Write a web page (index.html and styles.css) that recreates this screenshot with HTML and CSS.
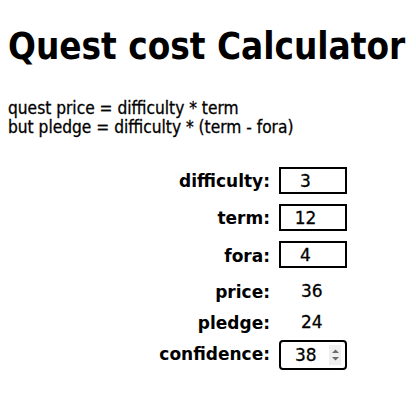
FILE: index.html
```html
<!DOCTYPE html>
<html lang="en">
<head>
  <meta charset="UTF-8">
  <title>Quest cost Calculator</title>
  <link rel="stylesheet" href="styles.css">
</head>
<body>
  <h1>Quest cost Calculator</h1>

  <p class="formula">
    quest price = difficulty * term<br>
    but pledge = difficulty * (term - fora)
  </p>

  <div class="calc">
    <label for="difficulty">difficulty:</label>
    <input id="difficulty" class="box" type="text" value="3">

    <label for="term">term:</label>
    <input id="term" class="box" type="text" value="12">

    <label for="fora">fora:</label>
    <input id="fora" class="box last" type="text" value="4">

    <span class="name">price:</span>
    <span class="value">36</span>

    <span class="name">pledge:</span>
    <span class="value">24</span>

    <label for="confidence">confidence:</label>
    <div class="spin">
      <span class="spin-value">38</span>
      <span class="spin-arrows">
        <svg width="9" height="14" viewBox="0 0 9 14">
          <path d="M1 5 L4.5 1.5 L8 5 Z" fill="#6b6b6b"/>
          <path d="M1 9 L4.5 12.5 L8 9 Z" fill="#6b6b6b"/>
        </svg>
      </span>
    </div>
  </div>
</body>
</html>
```

FILE: styles.css
```css
body {
  margin: 8px;
  font-family: "DejaVu Sans", Verdana, sans-serif;
  color: #000;
  background: #fff;
}

h1 {
  font-family: "DejaVu Sans Condensed", "DejaVu Sans", sans-serif;
  font-size: 36.5px;
  line-height: 42px;
  margin: 18px 0 31px;
}

.formula {
  font-family: "DejaVu Sans Condensed", "DejaVu Sans", sans-serif;
  font-size: 17.2px;
  line-height: 19px;
  margin: 0 0 25px;
  -webkit-text-stroke: 0.3px #000;
}

/* Calculator grid */
.calc {
  display: grid;
  grid-template-columns: 262px 68px;
  column-gap: 9px;
  align-items: center;
  font-size: 17px;
  font-weight: bold;
}

.calc label,
.calc .name {
  text-align: right;
}

.box {
  width: 68px;
  height: 27px;
  margin: 5px 0;
  border: 2px solid #000;
  box-sizing: border-box;
  font-family: inherit;
  font-size: 17px;
  text-align: center;
  padding: 0 15px 0 0;
  outline: none;
  -webkit-text-stroke: 0.3px #000;
}

.box.last {
  margin-bottom: 8px;
}

.value {
  padding-left: 22px;
  font-weight: normal;
  line-height: 31px;
  -webkit-text-stroke: 0.3px #000;
}

.spin {
  display: flex;
  align-items: center;
  justify-content: space-between;
  height: 30px;
  margin-top: 2px;
  border: 2px solid #000;
  border-radius: 4px;
  box-sizing: border-box;
  padding: 0 4px 0 14px;
  font-weight: normal;
  -webkit-text-stroke: 0.3px #000;
}

.spin-arrows {
  display: flex;
  align-items: center;
  justify-content: center;
  width: 12px;
  height: 20px;
  background: #efefef;
}
```
